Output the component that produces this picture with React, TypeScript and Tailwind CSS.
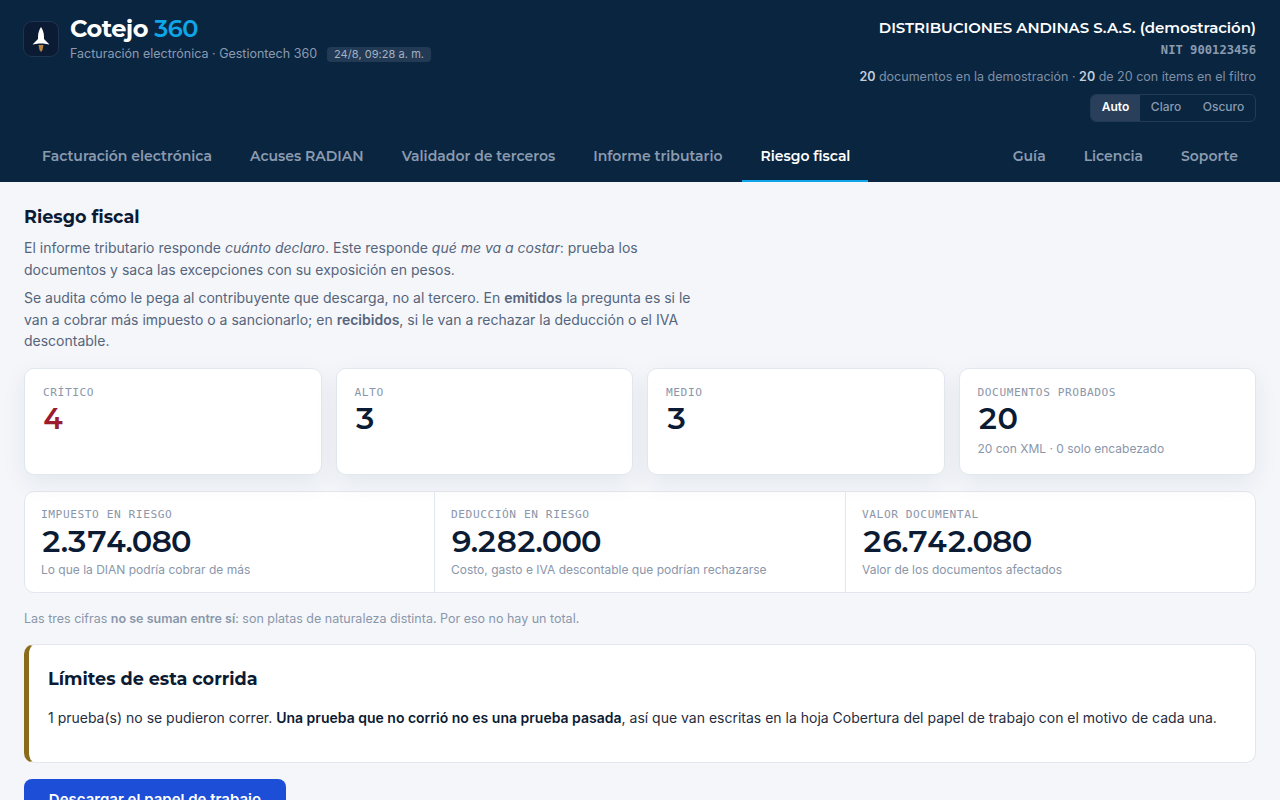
const head = "font-['Montserrat','Inter',sans-serif]";
const mono = "font-['DejaVu_Sans_Mono',monospace]";

const navLeft = ['Facturación electrónica', 'Acuses RADIAN', 'Validador de terceros', 'Informe tributario', 'Riesgo fiscal'];
const navRight = ['Guía', 'Licencia', 'Soporte'];

const counts = [
  { label: 'CRÍTICO', value: '4', color: 'text-[#9b1c2e]' },
  { label: 'ALTO', value: '3', color: 'text-[#0b1b33]' },
  { label: 'MEDIO', value: '3', color: 'text-[#0b1b33]' },
  { label: 'DOCUMENTOS PROBADOS', value: '20', color: 'text-[#0b1b33]', note: '20 con XML · 0 solo encabezado' },
];

const amounts = [
  { label: 'IMPUESTO EN RIESGO', value: '2.374.080', note: 'Lo que la DIAN podría cobrar de más' },
  { label: 'DEDUCCIÓN EN RIESGO', value: '9.282.000', note: 'Costo, gasto e IVA descontable que podrían rechazarse' },
  { label: 'VALOR DOCUMENTAL', value: '26.742.080', note: 'Valor de los documentos afectados' },
];

function Logo() {
  return (
    <div className="-ml-px flex h-9 w-9 items-center justify-center rounded-[9px] border border-[#1e3450] bg-[#0b1b33]">
      <svg width="36" height="36" viewBox="0 0 36 36" className="shrink-0">
        <path d="M18 6 C20 9 21 12 21 16 L21 18 L26.5 23.5 L20 22.5 L16 22.5 L9.5 23.5 L15 18 L15 16 C15 12 16 9 18 6 Z" fill="#ffffff" />
        <path d="M15.5 24 L20.5 24 L19.5 29 L18 31 L16.5 29 Z" fill="#b9853f" />
      </svg>
    </div>
  );
}

function Header() {
  return (
    <header className="bg-[#0a2540] px-6 pt-3.5">
      <div className="flex items-start justify-between">
        <div className="flex items-center gap-[11px]">
          <Logo />
          <div>
            <div className={`${head} text-[24px] font-bold leading-[30px] tracking-[-0.02em] text-white`}>
              Cotejo <span className="font-semibold text-[#0ea5e9]">360</span>
            </div>
            <div className="mt-px flex items-center gap-[10px] text-[12.5px] leading-[18px] text-[#8a9bb0]">
              <span>Facturación electrónica · Gestiontech 360</span>
              <span className="rounded bg-[#233a55] px-[7px] text-[11px] leading-[15px] tracking-[0.05px] text-[#a3b1c4]">24/8, 09:28 a. m.</span>
            </div>
          </div>
        </div>
        <div className="flex flex-col items-end">
          <div className={`${head} mt-[2px] text-[15px] font-semibold leading-[24px] tracking-[-0.07px] text-white`}>
            DISTRIBUCIONES ANDINAS S.A.S. (demostración)
          </div>
          <div className={`${mono} mt-[1px] text-[12.16px] font-semibold leading-[18px] text-[#8a9bb0]`}>NIT 900123456</div>
          <div className="mt-[9px] text-[12.5px] leading-[18px] text-[#7f90a6]">
            <b className="font-semibold text-[#c3cedb]">20</b> documentos en la demostración · <b className="font-semibold text-[#c3cedb]">20</b> de 20 con ítems en el filtro
          </div>
          <div className="mt-[8px] flex h-[28px] overflow-hidden rounded-md border border-[#233a55] text-[12px] font-medium leading-[24px]">
            <span className="w-[49px] bg-[#2a3f5a] text-center font-semibold text-white">Auto</span>
            <span className="w-[52px] text-center text-[#8a9bb0]">Claro</span>
            <span className="w-[63px] text-center text-[#8a9bb0]">Oscuro</span>
          </div>
        </div>
      </div>
      <nav className={`${head} mt-[18px] flex justify-between text-[14px] font-semibold`}>
        <div className="flex gap-[2px]">
          {navLeft.map((n) => (
            <a
              key={n}
              className={
                n === 'Riesgo fiscal'
                  ? 'border-b-2 border-[#0ea5e9] px-[18px] pb-[13px] pt-[6px] text-white'
                  : 'border-b-2 border-transparent px-[18px] pb-[13px] pt-[6px] text-[#8a9bb0]'
              }
            >
              {n}
            </a>
          ))}
        </div>
        <div className="flex gap-[2px]">
          {navRight.map((n) => (
            <a key={n} className="px-[18px] pb-[13px] pt-[6px] text-[#8a9bb0]">
              {n}
            </a>
          ))}
        </div>
      </nav>
    </header>
  );
}

export default function App() {
  return (
    <div className="min-h-screen bg-[#f4f6fa] font-['Inter',sans-serif]">
      <Header />
      <main className="px-6 pt-[23px]">
        <h1 className={`${head} text-[17.6px] font-bold leading-[24px] text-[#0b1b33]`}>Riesgo fiscal</h1>
        <div className="mt-[8px] max-w-[680px] text-[14px] leading-[21.7px] text-[#56657c]">
          <p>
            El informe tributario responde <em>cuánto declaro</em>. Este responde <em>qué me va a costar</em>: prueba los documentos y saca las excepciones con su exposición en pesos.
          </p>
          <p className="mt-[6.5px]">
            Se audita cómo le pega al contribuyente que descarga, no al tercero. En <b className="font-semibold">emitidos</b> la pregunta es si le van a cobrar más impuesto o a sancionarlo; en <b className="font-semibold">recibidos</b>, si le van a rechazar la deducción o el IVA descontable.
          </p>
        </div>

        <div className="mt-[15.5px] grid grid-cols-4 gap-[14px]">
          {counts.map((c) => (
            <div key={c.label} className="h-[107px] rounded-[10px] border border-[#e2e7ef] bg-white px-[18px] pt-[16px] shadow-[0_8px_24px_rgba(10,37,64,0.07)]">
              <div className={`${mono} text-[11.2px] leading-[16px] tracking-[0.56px] text-[#8a96aa]`}>{c.label}</div>
              <div className={`${head} text-[30px] font-semibold leading-[36px] tracking-[-1.35px] tabular-nums ${c.color}`}>{c.value}</div>
              {c.note && <div className="mt-[3px] text-[12px] leading-[18px] text-[#8a96aa]">{c.note}</div>}
            </div>
          ))}
        </div>

        <div className="mt-[16px] grid grid-cols-[410px_411px_1fr] divide-x divide-[#e2e7ef] rounded-[10px] border border-[#e2e7ef] bg-white">
          {amounts.map((a) => (
            <div key={a.label} className="h-[100px] px-[16px] pt-[15px]">
              <div className={`${mono} text-[11.2px] leading-[16px] tracking-[0.56px] text-[#8a96aa]`}>{a.label}</div>
              <div className={`${head} mt-px text-[30px] font-semibold leading-[36px] tracking-[-1.35px] tabular-nums text-[#0b1b33]`}>{a.value}</div>
              <div className="mt-px text-[12px] leading-[18px] text-[#8a96aa]">{a.note}</div>
            </div>
          ))}
        </div>

        <p className="mt-[16px] text-[12.5px] leading-[20px] text-[#8a96aa]">
          Las tres cifras <b className="font-semibold">no se suman entre sí</b>: son platas de naturaleza distinta. Por eso no hay un total.
        </p>

        <section className="mt-[15px] h-[119px] rounded-[10px] border border-l-[5px] border-[#e2e7ef] border-l-[#8a6d1a] bg-white pl-[19px] pt-[22px]">
          <h2 className={`${head} text-[17.6px] font-bold leading-[24px] text-[#0b1b33]`}>Límites de esta corrida</h2>
          <p className="mt-[16px] text-[14px] leading-[22px] text-[#1f2d40]">
            1 prueba(s) no se pudieron correr. <b className="font-semibold text-[#0b1b33]">Una prueba que no corrió no es una prueba pasada</b>, así que van escritas en la hoja Cobertura del papel de trabajo con el motivo de cada una.
          </p>
        </section>

        <button className="mb-6 mt-[16px] h-[44px] w-[262px] rounded-lg bg-[#1d4ed8] text-[15px] font-semibold text-white">
          Descargar el papel de trabajo
        </button>
      </main>
    </div>
  );
}
